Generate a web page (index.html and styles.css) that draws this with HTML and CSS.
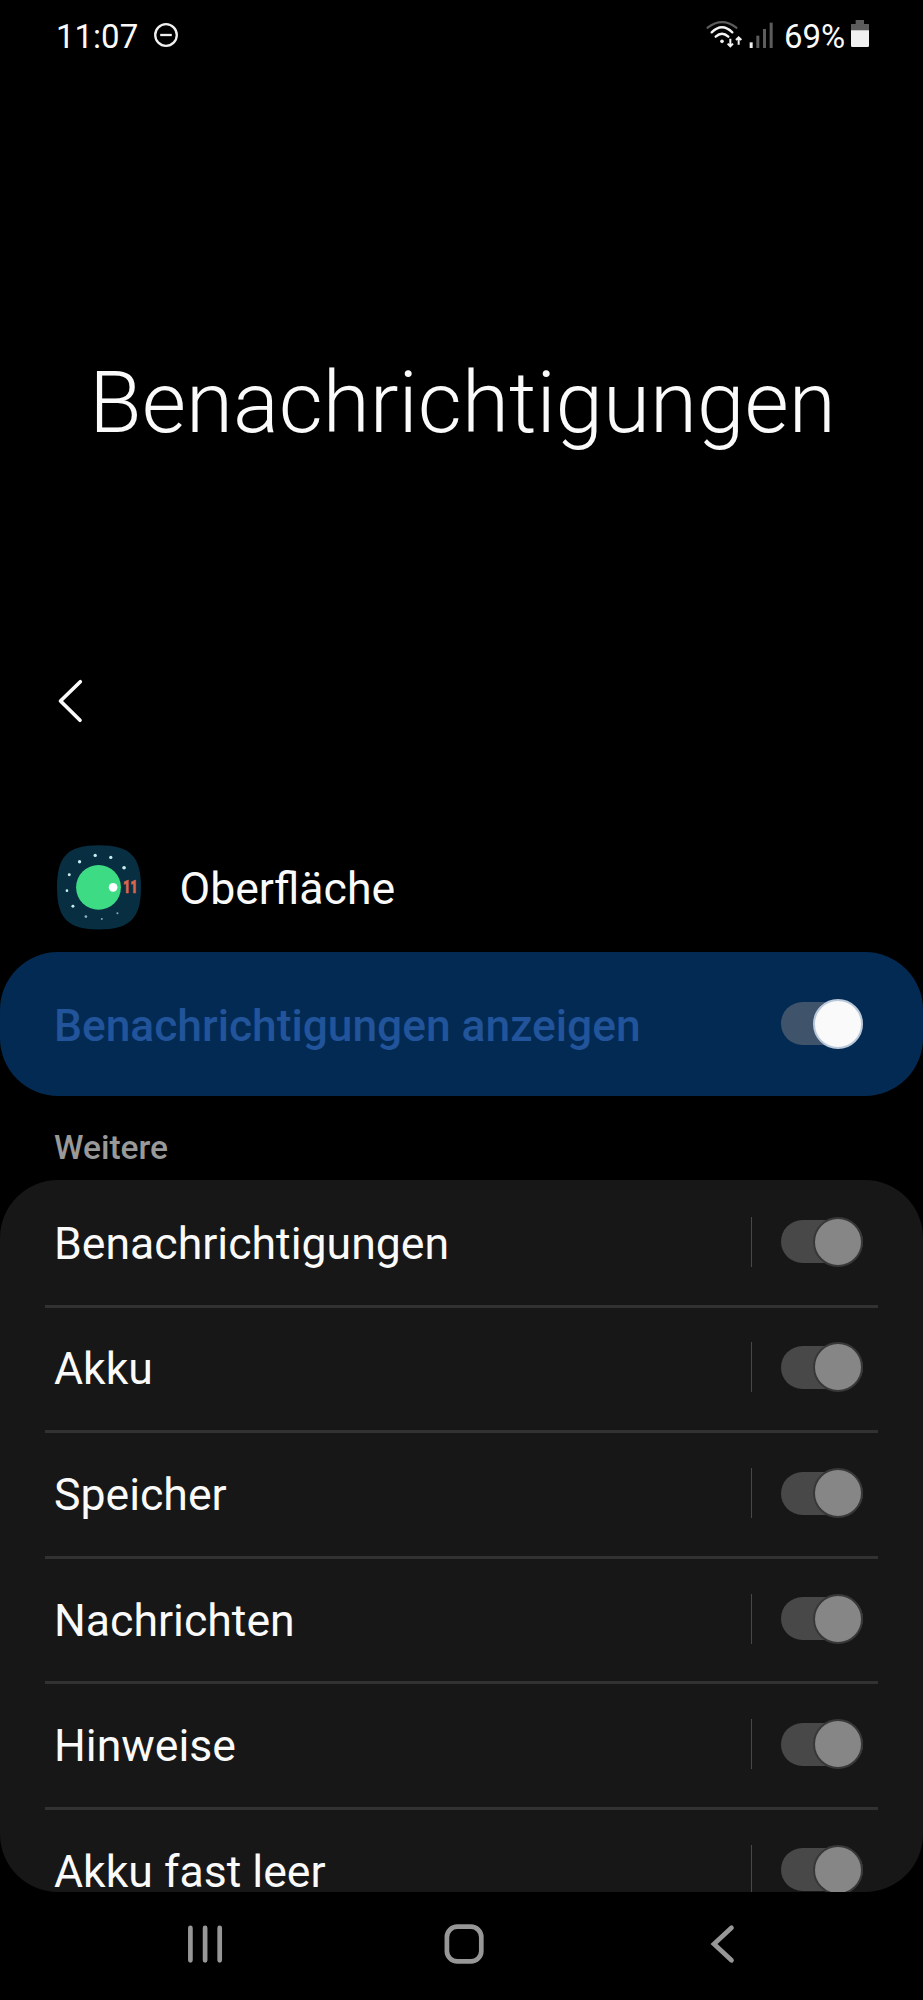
FILE: index.html
```html
<!DOCTYPE html>
<html lang="de">
<head>
<meta charset="utf-8">
<title>Benachrichtigungen</title>
<link rel="stylesheet" href="styles.css">
</head>
<body>
<div class="screen">
  <header class="status">
    <span class="status-time">11:07</span>
    <svg class="icon-dnd" width="26" height="26" viewBox="0 0 26 26"><circle cx="13" cy="13" r="10.8"/><path d="M7.2 13h11.6"/></svg>
    <span class="spacer"></span>
    <svg class="icon-radio" viewBox="42 24 204 96" width="68" height="32">
      <g class="arc"><path class="dim" d="M47 53Q90 20 133 53"/><path d="M59 67Q90 36 121 67"/><path d="M71 80Q90 62 109 80"/></g>
      <circle class="on" cx="90" cy="94" r="5.5"/>
      <g class="arrows"><path d="M115 86v22M107 101l8 8l8-8"/><path d="M140 104V82M132 90l8-8l8 8"/></g>
      <rect class="on" x="173" y="97" width="9" height="17"/>
      <rect class="off" x="193" y="77" width="9" height="37"/>
      <rect class="off" x="213" y="57" width="9" height="57"/>
      <rect class="off" x="233" y="38" width="9" height="76"/>
    </svg>
    <span class="status-percent">69%</span>
    <svg class="icon-battery" viewBox="479 30 54 90" width="18" height="30"><path class="off" d="M493 33h25v12h15v20h-54V45h14z"/><path class="on" d="M479 64h54v46q0 4-4 4h-46q-4 0-4-4z"/></svg>
  </header>

  <div class="hero"><h1>Benachrichtigungen</h1></div>

  <div class="toolbar">
    <svg width="30" height="48" viewBox="0 0 30 48"><path d="M25.3 4.7L5.5 24L25 43.3"/></svg>
  </div>

  <div class="app">
    <svg class="app-icon" width="84" height="85" viewBox="50 45 253 255">
      <path fill="#082e41" d="M176 45C270 45 303 78 303 172S270 299 176 299S50 266 50 172S82 45 176 45z"/>
      <circle cx="175" cy="172" r="67.5" fill="#3ddc84"/>
      <circle cx="219" cy="172" r="13" fill="#fff"/>
      <g fill="#c5edf0"><circle cx="165" cy="76" r="5"/><circle cx="212" cy="82" r="5"/><circle cx="252" cy="113" r="5.5"/><circle cx="118" cy="95" r="5"/><circle cx="87" cy="134" r="4.5"/><circle cx="80" cy="182" r="4"/><circle cx="98" cy="229" r="4.5"/></g>
      <g fill="#87b5bd"><circle cx="137" cy="260" r="4"/><circle cx="185" cy="267" r="3"/><circle cx="232" cy="250" r="3"/></g>
      <text class="app-version" x="249" y="190" textLength="44" lengthAdjust="spacingAndGlyphs">11</text>
    </svg>
    <span class="app-name">Oberfläche</span>
  </div>

  <section class="master">
    <span class="master-label">Benachrichtigungen anzeigen</span>
    <span class="toggle toggle-on"><span class="knob"></span></span>
  </section>

  <h2 class="group-title">Weitere</h2>

  <ul class="list">
    <li class="row"><span class="row-label">Benachrichtigungen</span><span class="toggle"><span class="knob"></span></span></li>
    <li class="row"><span class="row-label">Akku</span><span class="toggle"><span class="knob"></span></span></li>
    <li class="row"><span class="row-label">Speicher</span><span class="toggle"><span class="knob"></span></span></li>
    <li class="row"><span class="row-label">Nachrichten</span><span class="toggle"><span class="knob"></span></span></li>
    <li class="row"><span class="row-label">Hinweise</span><span class="toggle"><span class="knob"></span></span></li>
    <li class="row"><span class="row-label">Akku fast leer</span><span class="toggle"><span class="knob"></span></span></li>
  </ul>

  <nav class="nav">
    <svg width="40" height="44" viewBox="0 0 40 44"><path d="M5.4 5.9v32.4M20.1 5.9v32.4M34.7 5.9v32.4"/></svg>
    <svg class="nav-home" width="44" height="44" viewBox="0 0 44 44"><rect x="4.9" y="4.7" width="34.4" height="34.7" rx="10.5"/></svg>
    <svg width="30" height="44" viewBox="0 0 30 44"><path d="M24.5 5.8L7 22l17.5 16.3"/></svg>
  </nav>
</div>
</body>
</html>
```

FILE: styles.css
```css
* { box-sizing: border-box; }

body {
  margin: 0;
  background: #000;
  color: #fafafa;
  font-family: Roboto, sans-serif;
}

.screen {
  display: flex;
  flex-direction: column;
  width: 923px;
  height: 2000px;
  overflow: hidden;
}

svg { display: block; fill: none; flex: none; overflow: visible; }
.on { fill: #f0f0f0; }
.off { fill: #5c5c5c; }
.spacer { flex: 1; }

.status {
  display: flex;
  align-items: center;
  height: 72px;
  padding: 0 54px 0 56px;
  font-size: 33px;
  line-height: 40px;
}
.status-time { width: 84px; padding-top: 1px; }
.icon-dnd { margin: 0 0 2px 13px; stroke: #f0f0f0; stroke-width: 2.3; }
.icon-radio { margin: 0 10px 4px 0; }
.arc { stroke: #f5f5f5; stroke-width: 7; stroke-linecap: round; }
.arc .dim { stroke: #5c5c5c; }
.arrows { stroke: #f5f5f5; stroke-width: 6; }
.status-percent { width: 62px; padding-top: 1px; }
.icon-battery { margin: 0 0 4px 5px; }

.hero {
  display: flex;
  align-items: center;
  justify-content: center;
  height: 590px;
}
.hero h1 {
  margin: 72px 0 0 2px;
  font-size: 85.5px;
  font-weight: 300;
  line-height: 100px;
  white-space: nowrap;
}

.toolbar { height: 160px; padding: 15px 0 0 55px; }
.toolbar svg { stroke: #fafafa; stroke-width: 3.7; stroke-linecap: round; stroke-linejoin: round; }

.app {
  display: flex;
  align-items: center;
  gap: 38.5px;
  height: 130px;
  padding: 0 57px;
}
.app-name { font-size: 44.6px; line-height: 52px; padding-top: 3px; }
.app-version { fill: #d9664c; stroke: #d9664c; stroke-width: 2; font: 900 54px Roboto, sans-serif; }

.master {
  display: flex;
  align-items: center;
  justify-content: space-between;
  height: 143.5px;
  padding: 0 60px 0 54px;
  border-radius: 58px;
  background: #032a52;
}
.master-label {
  padding-top: 4px;
  color: #21549a;
  font-size: 44.3px;
  font-weight: 500;
  line-height: 52px;
}

.group-title {
  margin: 0;
  height: 84px;
  padding: 32px 0 0 54px;
  color: #999;
  font-size: 33.5px;
  font-weight: 500;
  line-height: 40px;
}

.list {
  height: 712.8px;
  margin: 0;
  padding: 2.6px 45px 0;
  overflow: hidden;
  border-radius: 58px;
  background: #171717;
  list-style: none;
}
.row {
  display: flex;
  align-items: center;
  justify-content: space-between;
  height: 125.6px;
  padding: 0 15px 3px 9px;
  border-bottom: 3px solid #323232;
}
.row-label { padding-top: 4px; font-size: 44.6px; line-height: 52px; }
.row .toggle::before {
  content: "";
  width: 1px;
  height: 50px;
  margin-left: -30px;
  margin-right: auto;
  background: #484848;
}

.toggle {
  display: flex;
  align-items: center;
  justify-content: flex-end;
  width: 82px;
  height: 43px;
  flex: none;
  border-radius: 22px;
  background: #484848;
}
.knob {
  width: 50px;
  height: 50px;
  flex: none;
  border: 2.6px solid #383838;
  border-radius: 50%;
  background: #868686;
}
.toggle-on { background: #3f546b; }
.toggle-on .knob { border-color: #b9c9da; background: #fafafa; }

.nav {
  display: flex;
  align-items: center;
  justify-content: space-between;
  height: 107px;
  padding: 0 186px 3px 185px;
}
.nav svg { stroke: #979797; stroke-width: 4.7; stroke-linecap: round; }
.nav .nav-home { margin-right: 4px; }
```
